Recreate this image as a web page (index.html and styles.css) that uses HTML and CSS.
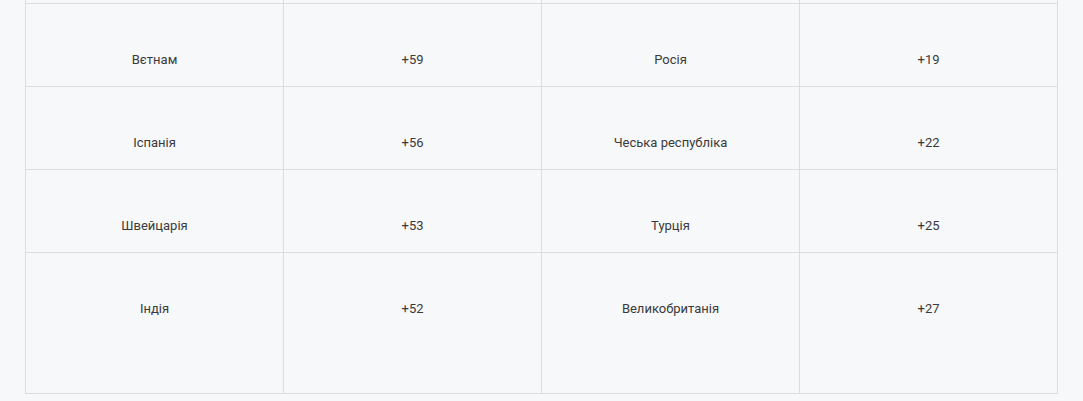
FILE: index.html
```html
<!DOCTYPE html>
<html lang="uk">
<head>
  <meta charset="UTF-8">
  <title>Коди країн</title>
  <link rel="stylesheet" href="styles.css">
</head>
<body>

  <table class="codes">
    <tr class="cut">
      <td></td><td></td><td></td><td></td>
    </tr>
    <tr>
      <td>Вєтнам</td><td>+59</td><td>Росія</td><td>+19</td>
    </tr>
    <tr>
      <td>Іспанія</td><td>+56</td><td>Чеська республіка</td><td>+22</td>
    </tr>
    <tr>
      <td>Швейцарія</td><td>+53</td><td>Турція</td><td>+25</td>
    </tr>
    <tr class="last">
      <td>Індія</td><td>+52</td><td>Великобританія</td><td>+27</td>
    </tr>
  </table>

</body>
</html>
```

FILE: styles.css
```css
body { margin: 0; background: #f7f8fa; font-family: Roboto, "Liberation Sans", Arial, sans-serif; }
.codes { margin-left: 25px; width: 1033px; border-collapse: separate; border-spacing: 0; border-left: 1px solid #dcdde0; table-layout: fixed; }
.codes td { width: 257px; padding: 47px 0 18px; line-height: 17px; font-size: 13px; color: #3a3a3a; text-align: center; vertical-align: top; border-right: 1px solid #dcdde0; border-bottom: 1px solid #dcdde0; }
.codes .cut td { height: 3px; padding: 0; }
.codes .last td { padding-bottom: 76px; }
```
